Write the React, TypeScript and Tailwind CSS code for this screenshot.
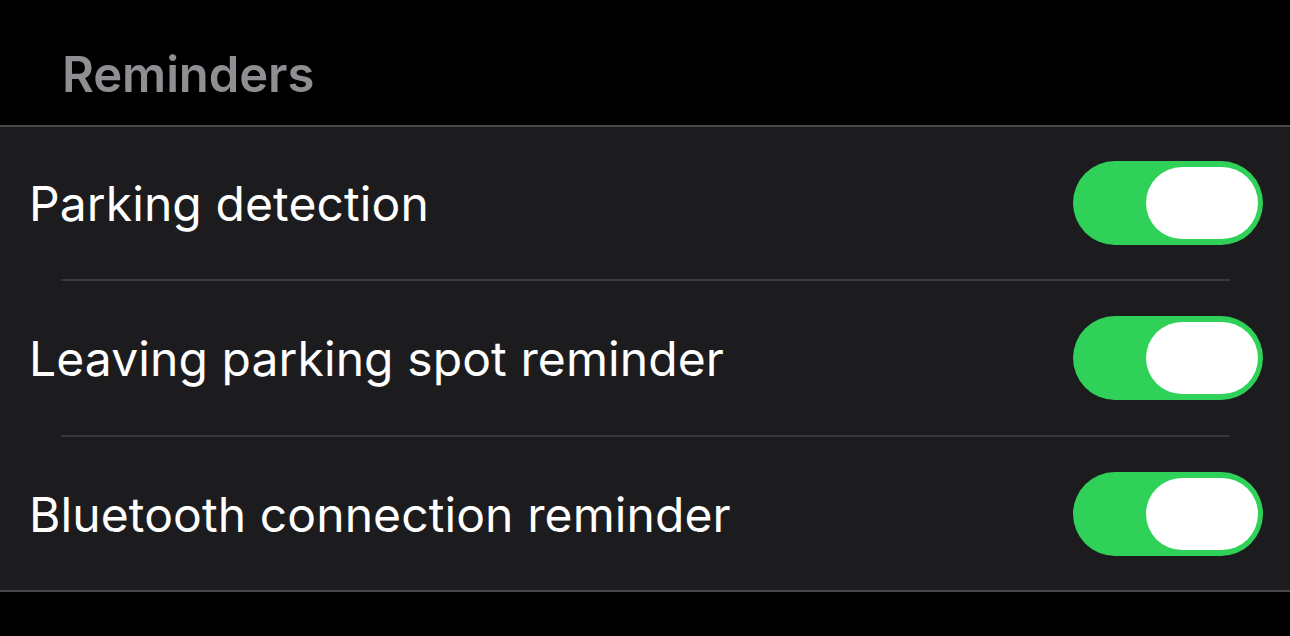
import React from "react";

const rows = [
  "Parking detection",
  "Leaving parking spot reminder",
  "Bluetooth connection reminder",
];

function Toggle() {
  return (
    <div className="flex h-[84px] w-[190px] shrink-0 items-center justify-end rounded-full bg-[#30d158] pr-[5px]">
      <div className="h-[72px] w-[112px] rounded-full bg-white" />
    </div>
  );
}

export default function App() {
  return (
    <div
      className="h-[636px] w-[1290px] overflow-hidden bg-black"
      style={{ fontFamily: "Inter, 'Noto Sans', sans-serif" }}
    >
      <div className="flex h-[125px] items-start pl-[62px] pt-[47px]">
        <span className="text-[49px] font-semibold leading-[56px] tracking-[-0.1px] text-[#8e8e93]">
          Reminders
        </span>
      </div>
      <div className="border-y-[2px] border-t-[#48484a] border-b-[#48484a] bg-[#1c1c1e]">
        {rows.map((label, i) => (
          <div key={label}>
            {i > 0 && <div className="ml-[61px] mr-[60px] h-[2px] bg-[#38383a]" />}
            <div
              className={
                "flex items-center justify-between pl-[29px] pr-[27px] " +
                (i === 0 ? "h-[152px]" : i === 1 ? "h-[154px]" : "h-[153px]")
              }
            >
              <span className="pt-[2px] text-[48px] font-normal leading-[56px] tracking-[0.1px] text-white">
                {label}
              </span>
              <Toggle />
            </div>
          </div>
        ))}
      </div>
    </div>
  );
}
